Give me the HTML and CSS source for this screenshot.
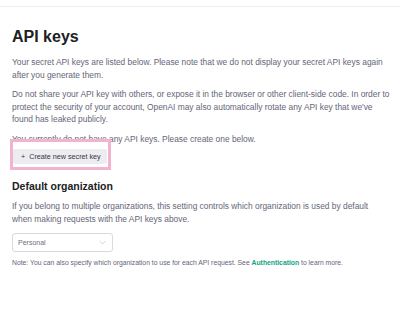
FILE: index.html
```html
<!DOCTYPE html>
<html lang="en">
<head>
    <meta charset="UTF-8">
    <meta name="viewport" content="width=device-width, initial-scale=1.0">
    <title>API keys</title>
    <link rel="stylesheet" href="styles.css">
</head>
<body>
    <div class="topbar"></div>
    <div class="page">
        <h1>API keys</h1>
        <p>Your secret API keys are listed below. Please note that we do not display your secret API keys again after you generate them.</p>
        <p>Do not share your API key with others, or expose it in the browser or other client-side code. In order to protect the security of your account, OpenAI may also automatically rotate any API key that we've found has leaked publicly.</p>
        <p class="empty">You currently do not have any API keys. Please create one below.</p>
        <div class="highlight">
            <button class="btn-create"><span class="plus">+</span>Create new secret key</button>
        </div>

        <h2>Default organization</h2>
        <p class="org-help">If you belong to multiple organizations, this setting controls which organization is used by default when making requests with the API keys above.</p>
        <div class="select">
            <span>Personal</span>
            <svg width="7" height="5" viewBox="0 0 7 5"><path d="M0.6 1 L3.5 3.9 L6.4 1" fill="none" stroke="#c5c5d2" stroke-width="0.8"/></svg>
        </div>
        <p class="note">Note: You can also specify which organization to use for each API request. See <a href="#">Authentication</a> to learn more.</p>
    </div>
</body>
</html>
```

FILE: styles.css
```css
body {
    margin: 0;
    font-family: "Liberation Sans", Arial, sans-serif;
    color: #656577;
    background: #fff;
}
.topbar {
    height: 6px;
    border-bottom: 1px solid #ececf1;
}
.page {
    padding: 0 6px 0 12px;
}
h1 {
    font-size: 16px;
    font-weight: 700;
    color: #202123;
    line-height: 20px;
    margin: 20px 0 9px;
}
p {
    font-size: 8.4px;
    line-height: 12.5px;
    margin: 0 0 7px;
}
p.empty {
    margin-bottom: 0;
}
p.org-help {
    max-width: 372px;
}
.highlight {
    display: inline-block;
    position: relative;
    margin: -8px 0 0 -2px;
    padding: 7px 1px 3px 0;
    border: 3px solid #f2b3cf;
    background: #fff;
}
.btn-create {
    display: block;
    height: 15px;
    padding: 0 6px 0 8px;
    font-family: inherit;
    font-size: 7.2px;
    color: #353740;
    background: #ececf1;
    border: none;
    border-radius: 2px;
    cursor: pointer;
}
.plus {
    margin-right: 4px;
}
h2 {
    font-size: 10.5px;
    font-weight: 700;
    color: #202123;
    line-height: 13px;
    margin: 10px 0 7px;
}
.select {
    box-sizing: border-box;
    width: 101px;
    height: 19px;
    margin: 8px 0 6px;
    padding: 0 6px 0 5px;
    border: 1px solid #d9d9e3;
    border-radius: 3px;
    display: flex;
    align-items: center;
    justify-content: space-between;
    font-size: 7px;
    color: #6e6e80;
}
p.note {
    font-size: 6.8px;
    line-height: 10px;
}
a {
    color: #10a37f;
    text-decoration: none;
    font-weight: 700;
}
```
